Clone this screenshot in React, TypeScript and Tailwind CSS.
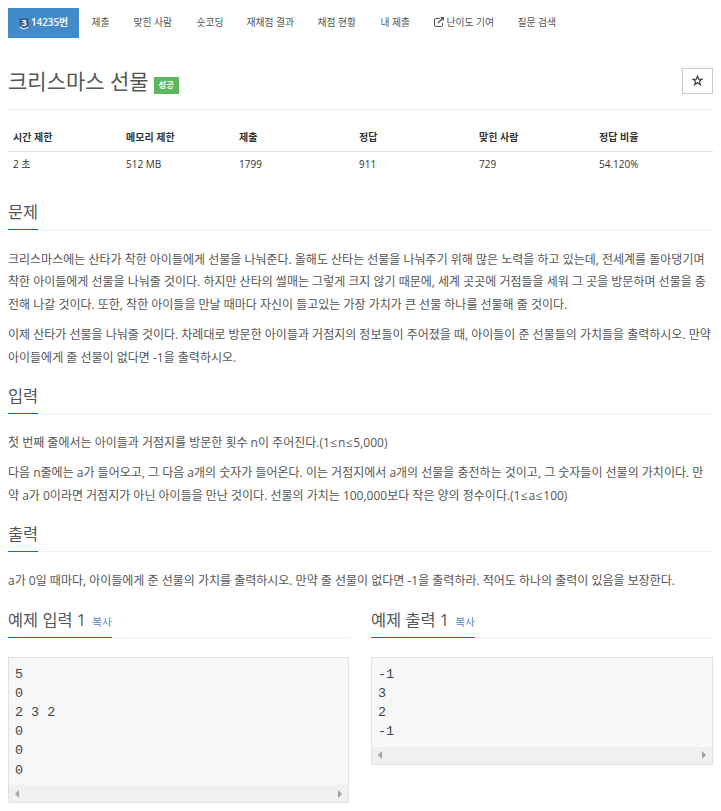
import React from "react";

interface Tab {
  label: string;
  className: string;
  external?: boolean;
}

const tabs: Tab[] = [
  { label: "제출", className: "ml-[12.5px] w-[42px]" },
  { label: "맞힌 사람", className: "w-[63px]" },
  { label: "숏코딩", className: "w-[50px]" },
  { label: "재채점 결과", className: "w-[71px]" },
  { label: "채점 현황", className: "w-[63px]" },
  { label: "내 제출", className: "w-[53px]" },
  { label: "난이도 기여", className: "w-[84px]", external: true },
  { label: "질문 검색", className: "" },
];

const stats = [
  { title: "시간 제한", value: "2 초" },
  { title: "메모리 제한", value: "512 MB" },
  { title: "제출", value: "1799" },
  { title: "정답", value: "911" },
  { title: "맞힌 사람", value: "729" },
  { title: "정답 비율", value: "54.120%" },
];

const TierBadge: React.FC = () => (
  <span className="mt-[2px] grid h-[12px] w-[10px] shrink-0 place-items-center">
    <svg className="col-start-1 row-start-1 h-[12px] w-[10px]" viewBox="0 0 10 12">
      <path d="M0.5 0.5h9v8L5 10.2 0.5 8.5z" fill="#435f7a" />
      <path d="M0.5 9L5 11l4.5-2" fill="none" stroke="#d5e2ee" strokeWidth="1.2" />
    </svg>
    <span className="col-start-1 row-start-1 pb-[2px] text-[9px] leading-[10px] font-bold">3</span>
  </span>
);

const ExternalIcon: React.FC = () => (
  <svg className="mr-[3px] mb-[2px] h-[10px] w-[10px] shrink-0" viewBox="0 0 10 10" fill="none" stroke="#555">
    <path d="M5.5 1.5H2A1.5 1.5 0 0 0 .5 3v5A1.5 1.5 0 0 0 2 9.5h5A1.5 1.5 0 0 0 8.5 8V6" />
    <path d="M4 6L8.5 1.5" strokeWidth="1.4" />
    <path d="M6 0h4v4z" fill="#555" stroke="none" />
  </svg>
);

const Headline: React.FC<{ title: string; copy?: boolean }> = ({ title, copy }) => (
  <div className="flex h-[30px] border-b border-dotted border-[#dde3e8]">
    <h2 className="h-[30px] whitespace-nowrap border-b border-[#0076b8] text-[16.4px] leading-[24px] text-[#555]">
      {title}
      {copy && <a className="ml-[6px] text-[10.6px] text-[#5186c6]">복사</a>}
    </h2>
  </div>
);

// The inequality signs get a little room on both sides
const Line: React.FC<{ text: string }> = ({ text }) => (
  <span className="block whitespace-nowrap">
    {text.split("≤").map((part, index) => (
      <React.Fragment key={index}>
        {index > 0 && <span className="px-[0.6px]">≤</span>}
        {part}
      </React.Fragment>
    ))}
  </span>
);

const Paragraph: React.FC<{ lines: string[] }> = ({ lines }) => (
  <p className="mb-[8px] text-[12px] leading-[22.4px] text-[#555]">
    {lines.map((line) => (
      <Line key={line} text={line} />
    ))}
  </p>
);

const Sample: React.FC<{ title: string; data: string }> = ({ title, data }) => (
  <div>
    <Headline title={title} copy />
    <div className="mt-[19px] border border-[#e0e0e5] bg-[#f7f7f9]">
      <pre className="px-[6px] pt-[7px] pb-[5.2px] font-['Liberation_Mono',monospace] text-[13.4px] leading-[19.2px] text-[#444]">{data}</pre>
      <div className="flex h-[17px] items-center justify-between bg-[#f0f0f0] px-[6px]">
        <svg className="h-[8px] w-[4px]" viewBox="0 0 4 8"><path d="M4 0v8L0 4z" fill="#a3a3a3" /></svg>
        <svg className="h-[8px] w-[4px]" viewBox="0 0 4 8"><path d="M0 0v8l4-4z" fill="#a3a3a3" /></svg>
      </div>
    </div>
  </div>
);

const App: React.FC = () => {
  return (
    <div className="h-[811px] w-[721px] overflow-hidden bg-white px-[8px] pt-[8px] font-['Open_Sans','Noto_Sans_CJK_KR',sans-serif] text-[#555]">
      {/* Problem menu */}
      <nav className="flex h-[30px] items-center whitespace-nowrap text-[9.8px]">
        <a className="flex h-[30px] w-[71px] items-center bg-[#428bca] pl-[11px] font-semibold text-white">
          <TierBadge />
          <span className="ml-[2px]">14235번</span>
        </a>
        {tabs.map((tab) => (
          <a key={tab.label} className={`flex shrink-0 items-center ${tab.className}`}>
            {tab.external && <ExternalIcon />}
            {tab.label}
          </a>
        ))}
      </nav>

      {/* Title */}
      <header className="flex h-[72px] items-start border-b border-[#eee] pt-[27px]">
        <h1 className="whitespace-nowrap text-[21px] leading-[32px]">크리스마스 선물</h1>
        <span className="mt-[12px] ml-[5px] flex h-[17px] w-[25px] items-center justify-center bg-[#5cb85c] text-[8.4px] font-bold text-white">성공</span>
        <button className="mt-[3px] ml-auto flex h-[26px] w-[31px] items-center justify-center border border-[#ccc]">
          <svg className="mb-[1px] h-[11px] w-[11px]" viewBox="0 0 11 11" fill="none" stroke="#333" strokeWidth="1.1">
            <path d="M5.5 1L6.7 4.2h3.5L7.4 6.3l1 3.4-2.9-2-2.9 2 1-3.4L.8 4.2h3.5z" />
          </svg>
        </button>
      </header>

      <table className="mt-[15px] w-[705px] table-fixed text-left text-[10px] leading-[15px] text-[#333]">
        <colgroup>
          <col className="w-[113px]" />
          <col className="w-[113px]" />
          <col className="w-[120px]" />
          <col className="w-[120px]" />
          <col className="w-[120px]" />
          <col />
        </colgroup>
        <thead>
          <tr className="h-[26px] border-b border-[#ddd]">
            {stats.map((s) => <th key={s.title} className="pl-[5px] font-semibold">{s.title}</th>)}
          </tr>
        </thead>
        <tbody>
          <tr className="h-[26px]">
            {stats.map((s) => <td key={s.title} className="pl-[5px]">{s.value}</td>)}
          </tr>
        </tbody>
      </table>

      <section className="mt-[23px]">
        <Headline title="문제" />
        <div className="pt-[19px]">
          <Paragraph
            lines={[
              "크리스마스에는 산타가 착한 아이들에게 선물을 나눠준다. 올해도 산타는 선물을 나눠주기 위해 많은 노력을 하고 있는데, 전세계를 돌아댕기며",
              "착한 아이들에게 선물을 나눠줄 것이다. 하지만 산타의 썰매는 그렇게 크지 않기 때문에, 세계 곳곳에 거점들을 세워 그 곳을 방문하며 선물을 충",
              "전해 나갈 것이다. 또한, 착한 아이들을 만날 때마다 자신이 들고있는 가장 가치가 큰 선물 하나를 선물해 줄 것이다.",
            ]}
          />
          <Paragraph
            lines={[
              "이제 산타가 선물을 나눠줄 것이다. 차례대로 방문한 아이들과 거점지의 정보들이 주어졌을 때, 아이들이 준 선물들의 가치들을 출력하시오. 만약",
              "아이들에게 줄 선물이 없다면 -1을 출력하시오.",
            ]}
          />
        </div>
      </section>

      <section className="mt-[15px]">
        <Headline title="입력" />
        <div className="pt-[18px]">
          <Paragraph lines={["첫 번째 줄에서는 아이들과 거점지를 방문한 횟수 n이 주어진다.(1≤n≤5,000)"]} />
          <Paragraph
            lines={[
              "다음 n줄에는 a가 들어오고, 그 다음 a개의 숫자가 들어온다. 이는 거점지에서 a개의 선물을 충전하는 것이고, 그 숫자들이 선물의 가치이다. 만",
              "약 a가 0이라면 거점지가 아닌 아이들을 만난 것이다. 선물의 가치는 100,000보다 작은 양의 정수이다.(1≤a≤100)",
            ]}
          />
        </div>
      </section>

      <section className="mt-[15px]">
        <Headline title="출력" />
        <div className="pt-[18px]">
          <Paragraph lines={["a가 0일 때마다, 아이들에게 준 선물의 가치를 출력하시오. 만약 줄 선물이 없다면 -1을 출력하라. 적어도 하나의 출력이 있음을 보장한다."]} />
        </div>
      </section>

      {/* Samples */}
      <section className="mt-[15px] grid grid-cols-[341px_342px] items-start gap-[22px]">
        <Sample title="예제 입력 1" data={"5\n0\n2 3 2\n0\n0\n0"} />
        <Sample title="예제 출력 1" data={"-1\n3\n2\n-1"} />
      </section>
    </div>
  );
};

export default App;
